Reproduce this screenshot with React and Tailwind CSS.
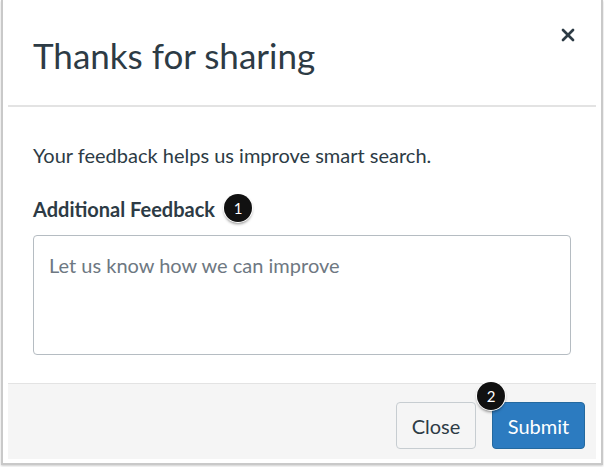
import { X } from 'lucide-react'

function Badge({ n, className = '' }) {
  return (
    <span
      className={`inline-flex items-center justify-center w-[28px] h-[28px] rounded-full bg-[#111] text-white text-[15px] leading-none font-normal shadow-[0_2px_3px_rgba(0,0,0,0.45)] ring-1 ring-white ${className}`}
    >
      {n}
    </span>
  )
}

export default function App() {
  return (
    <div className="w-[604px] h-[467px] bg-white font-['Lato','Liberation_Sans',sans-serif] text-[#2d3b45]">
      <div className="mx-[1px] h-[465px] border-x-2 border-b-2 border-[#c9c9c9] px-[5px] pb-[4px] flex flex-col shadow-[0_1px_2px_rgba(0,0,0,0.2)]">
        <div className="h-[107px] shrink-0 flex items-start justify-between border-b-2 border-[#e3e3e3] pl-[25px] pr-[18px]">
          <h1 className="text-[35px] leading-none font-normal mt-[38px]">Thanks for sharing</h1>
          <button className="mt-[25px] text-[#2d3b45]">
            <X size={20} strokeWidth={3.2} />
          </button>
        </div>

        <div className="flex-1 px-[25px] pt-[33px]">
          <p className="text-[20px] leading-[30px]">Your feedback helps us improve smart search.</p>
          <div className="mt-[24px] flex items-center h-[30px]">
            <span className="text-[20px] font-bold leading-[30px]">Additional Feedback</span>
            <Badge n="1" className="ml-[9px] -mt-[2px]" />
          </div>
          <textarea
            placeholder="Let us know how we can improve"
            className="mt-[11px] w-[538px] h-[120px] block resize-none border border-[#b5bcc2] rounded-[4px] px-[15px] py-[14px] text-[20px] leading-[30px] placeholder:text-[#6e7882] outline-none"
          />
        </div>

        <div className="h-[76px] shrink-0 bg-[#f5f5f5] border-t border-[#e3e3e3] flex items-start justify-end gap-[16px] pt-[18px] pr-[11px]">
          <button className="h-[47px] w-[80px] rounded-[4px] border border-[#c7cdd1] bg-[#f5f5f5] text-[20px] text-[#2d3b45]">
            Close
          </button>
          <div className="relative">
            <Badge n="2" className="absolute -left-[15px] -top-[20px]" />
            <button className="h-[47px] w-[93px] rounded-[4px] border border-[#24699f] bg-[#2c7bc0] text-[20px] text-white">
              Submit
            </button>
          </div>
        </div>
      </div>
    </div>
  )
}
